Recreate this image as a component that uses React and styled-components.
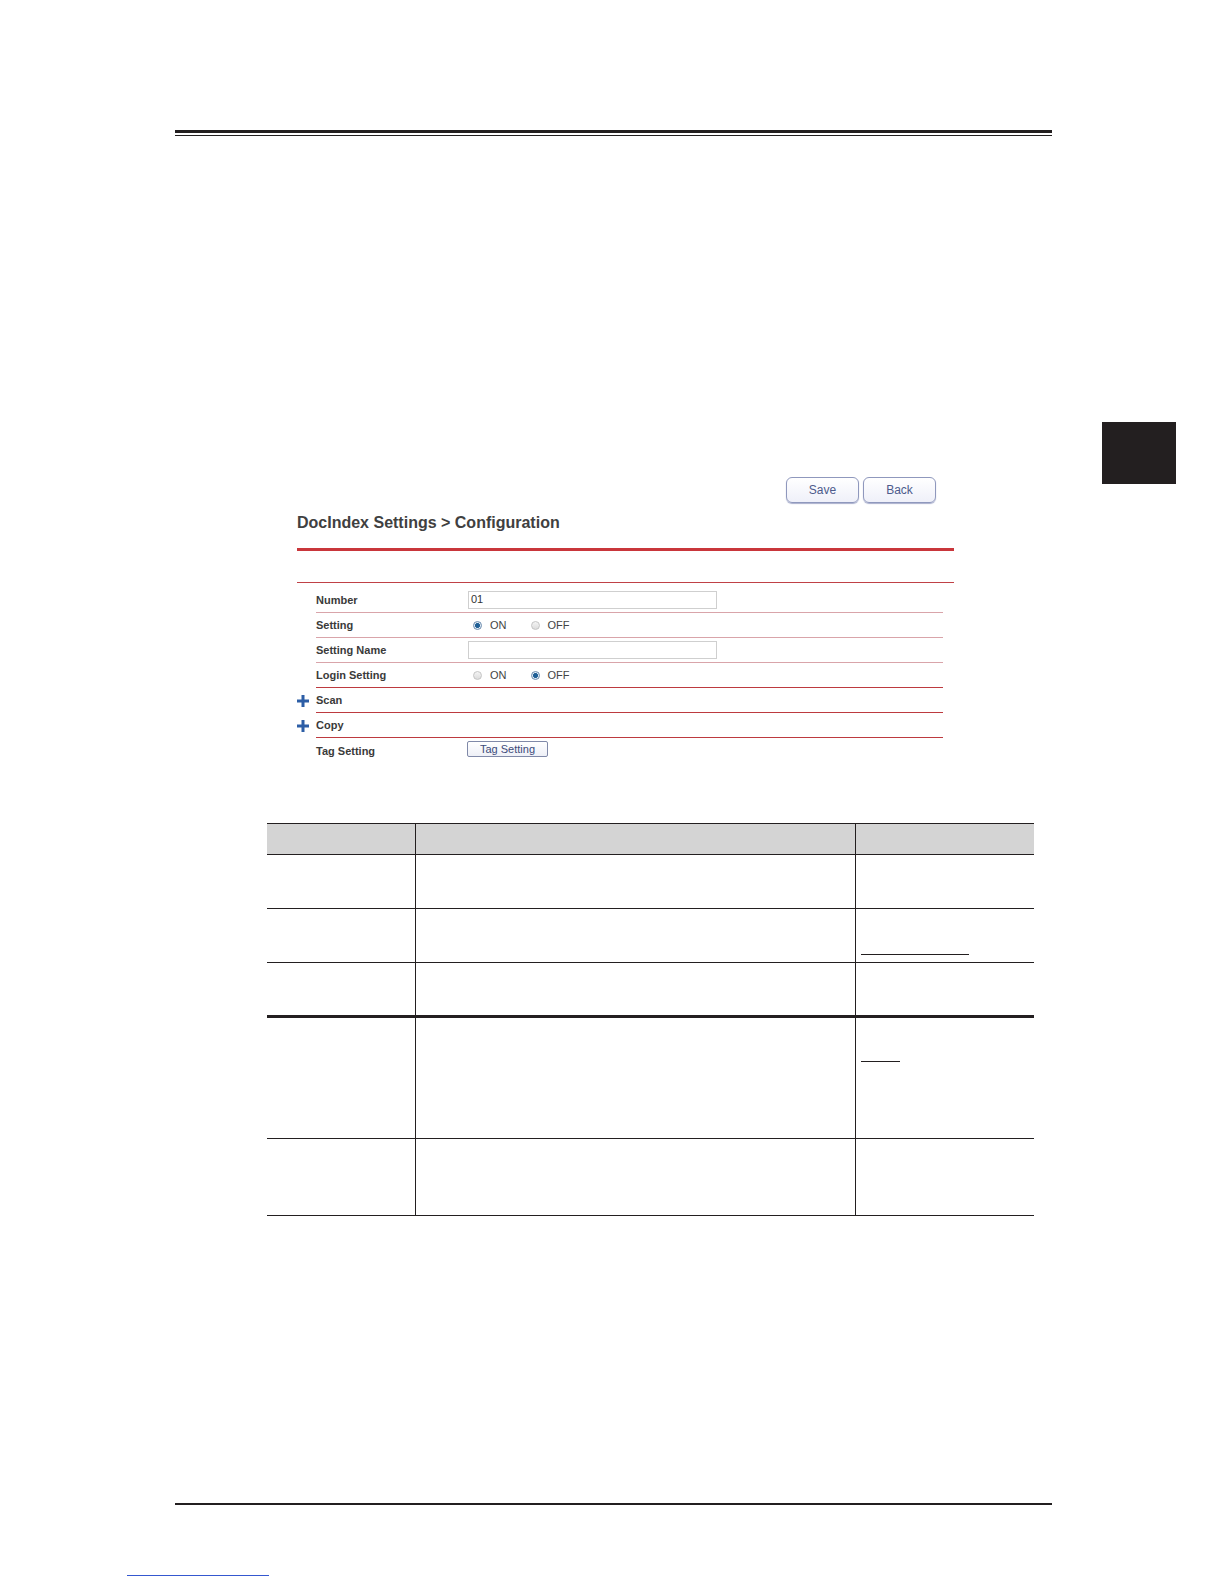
import React from "react";
import styled, { createGlobalStyle } from "styled-components";

const GlobalStyle = createGlobalStyle`
  body {
    margin: 0;
    background: #ffffff;
    font-family: "Liberation Sans", Arial, sans-serif;
  }
`;

const formRows = [
  { label: "Number", type: "input", value: "01", soft: true },
  { label: "Setting", type: "radio", on: true, soft: true },
  { label: "Setting Name", type: "input", value: "", soft: true },
  { label: "Login Setting", type: "radio", on: false },
  { label: "Scan", type: "group" },
  { label: "Copy", type: "group" },
  { label: "Tag Setting", type: "button", last: true },
];

// row heights of the parameter table, and where an underline sits in the last column
const tableRows = [
  { height: 54 },
  { height: 54, underline: 108, offset: 45 },
  { height: 54, thick: true },
  { height: 122, underline: 39, offset: 43 },
  { height: 77 },
];

function Radio({ checked, label }) {
  return (
    <RadioItem>
      <RadioDot checked={checked} />
      <span>{label}</span>
    </RadioItem>
  );
}

function PlusIcon() {
  return (
    <svg width="12" height="12" viewBox="0 0 12 12">
      <path d="M4.5 0h3v4.5H12v3H7.5V12h-3V7.5H0v-3h4.5z" fill="#2d5ea6" />
    </svg>
  );
}

function App() {
  return (
    <Page>
      <GlobalStyle />
      <HeaderRule />
      <Section>
        <Panel>
          <ButtonBar>
            <PanelButton>Save</PanelButton>
            <PanelButton>Back</PanelButton>
          </ButtonBar>
          <Title>DocIndex Settings &gt; Configuration</Title>
          <RedRule />
          <ThinRule />
          <Rows>
            {formRows.map((row) => (
              <Row key={row.label}>
                <IconCell>{row.type === "group" && <PlusIcon />}</IconCell>
                <RowBody soft={row.soft} last={row.last}>
                  <Label>{row.label}</Label>
                  {row.type === "input" && <TextBox>{row.value}</TextBox>}
                  {row.type === "radio" && (
                    <RadioGroup>
                      <Radio checked={row.on} label="ON" />
                      <Radio checked={!row.on} label="OFF" />
                    </RadioGroup>
                  )}
                  {row.type === "button" && <SmallButton>Tag Setting</SmallButton>}
                </RowBody>
              </Row>
            ))}
          </Rows>
        </Panel>
        <SideTab />
      </Section>

      <Table>
        <colgroup>
          <col style={{ width: 148 }} />
          <col style={{ width: 440 }} />
          <col style={{ width: 179 }} />
        </colgroup>
        <thead>
          <tr>
            <Th />
            <Th />
            <Th />
          </tr>
        </thead>
        <tbody>
          {tableRows.map((r, i) => (
            <Tr key={i} thick={r.thick} style={{ height: r.height }}>
              <Td />
              <Td />
              <Td>
                {r.underline && (
                  <Underline style={{ width: r.underline, marginTop: r.offset }} />
                )}
              </Td>
            </Tr>
          ))}
        </tbody>
      </Table>

      <FooterRule />
      <LinkLine />
    </Page>
  );
}

export default App;

const Page = styled.div`
  width: 1224px;
  min-height: 1584px;
  padding-top: 130px;
  box-sizing: border-box;
  background: #ffffff;
  overflow: hidden;
`;

const HeaderRule = styled.div`
  margin-left: 175px;
  width: 877px;
  height: 2px;
  border-top: 3px solid #231f20;
  border-bottom: 1px solid #231f20;
`;

const Section = styled.div`
  display: flex;
  align-items: flex-start;
  margin-top: 286px;
`;

const Panel = styled.div`
  margin-left: 297px;
  width: 657px;
  padding-top: 55px;
`;

const SideTab = styled.div`
  margin-left: 148px;
  width: 74px;
  height: 62px;
  background: #231f20;
`;

const ButtonBar = styled.div`
  display: flex;
  justify-content: flex-end;
  gap: 4px;
  padding-right: 18px;
`;

const PanelButton = styled.div`
  width: 73px;
  height: 26px;
  box-sizing: border-box;
  border: 1px solid #8f98bd;
  border-radius: 6px;
  background: linear-gradient(#ffffff, #eff0f9);
  box-shadow: 0 1px 1px #a9afcd;
  color: #4d5b8c;
  font-size: 12px;
  display: flex;
  align-items: center;
  justify-content: center;
`;

const Title = styled.div`
  margin-top: 11px;
  height: 18px;
  line-height: 18px;
  font-size: 16px;
  font-weight: bold;
  color: #404040;
`;

const RedRule = styled.div`
  margin-top: 16px;
  height: 3px;
  background: #c9363b;
`;

const ThinRule = styled.div`
  margin-top: 31px;
  border-top: 1px solid #c04146;
`;

const Rows = styled.div`
  padding-top: 5px;
`;

const Row = styled.div`
  display: grid;
  grid-template-columns: 19px 1fr;
  height: 25px;
`;

const IconCell = styled.div`
  display: flex;
  align-items: center;
`;

const RowBody = styled.div`
  margin-right: 11px;
  display: grid;
  grid-template-columns: 152px 1fr;
  align-items: center;
  border-bottom: ${({ last, soft }) =>
    last ? "none" : soft ? "1px solid #d9a4aa" : "1px solid #bd3a3f"};
`;

const Label = styled.div`
  font-size: 11px;
  font-weight: bold;
  color: #3a3a3a;
`;

const TextBox = styled.div`
  width: 249px;
  height: 18px;
  box-sizing: border-box;
  border: 1px solid #cfcfcf;
  font-size: 11px;
  line-height: 15px;
  padding-left: 2px;
  color: #333;
`;

const RadioGroup = styled.div`
  display: flex;
  gap: 24px;
  padding-left: 5px;
`;

const RadioItem = styled.label`
  display: flex;
  align-items: center;
  gap: 8px;
  font-size: 11px;
  color: #444;
`;

const RadioDot = styled.span`
  width: 9px;
  height: 9px;
  box-sizing: border-box;
  border-radius: 50%;
  border: 1px solid ${({ checked }) => (checked ? "#6b8bad" : "#c4c4c4")};
  background: ${({ checked }) =>
    checked
      ? "radial-gradient(circle, #1f5f95 0 2.2px, #dfe9f3 2.6px)"
      : "linear-gradient(#f4f4f4, #dcdcdc)"};
`;

const SmallButton = styled.div`
  width: 81px;
  height: 16px;
  box-sizing: border-box;
  border: 1px solid #8089a8;
  border-radius: 2px;
  background: linear-gradient(#ffffff, #eef0f7);
  color: #3d4b7a;
  font-size: 11px;
  display: flex;
  align-items: center;
  justify-content: center;
  margin-top: -3px;
  margin-left: -1px;
`;

const Table = styled.table`
  margin-top: 60px;
  margin-left: 267px;
  width: 767px;
  border-collapse: collapse;
  table-layout: fixed;
`;

const Th = styled.th`
  height: 30px;
  padding: 0;
  background: #d4d4d4;
  border-top: 1px solid #231f20;
  border-bottom: 1px solid #231f20;
  & + & {
    border-left: 1px solid #231f20;
  }
`;

const Tr = styled.tr`
  border-bottom: ${({ thick }) => (thick ? "3px" : "1px")} solid #231f20;
`;

const Td = styled.td`
  padding: 0 0 0 5px;
  vertical-align: top;
  & + & {
    border-left: 1px solid #231f20;
  }
`;

const Underline = styled.div`
  border-bottom: 1px solid #231f20;
`;

const FooterRule = styled.div`
  margin-top: 287px;
  margin-left: 175px;
  width: 877px;
  border-top: 2px solid #231f20;
`;

const LinkLine = styled.div`
  margin-top: 70px;
  margin-left: 127px;
  width: 142px;
  border-top: 1px solid #3558d0;
`;
